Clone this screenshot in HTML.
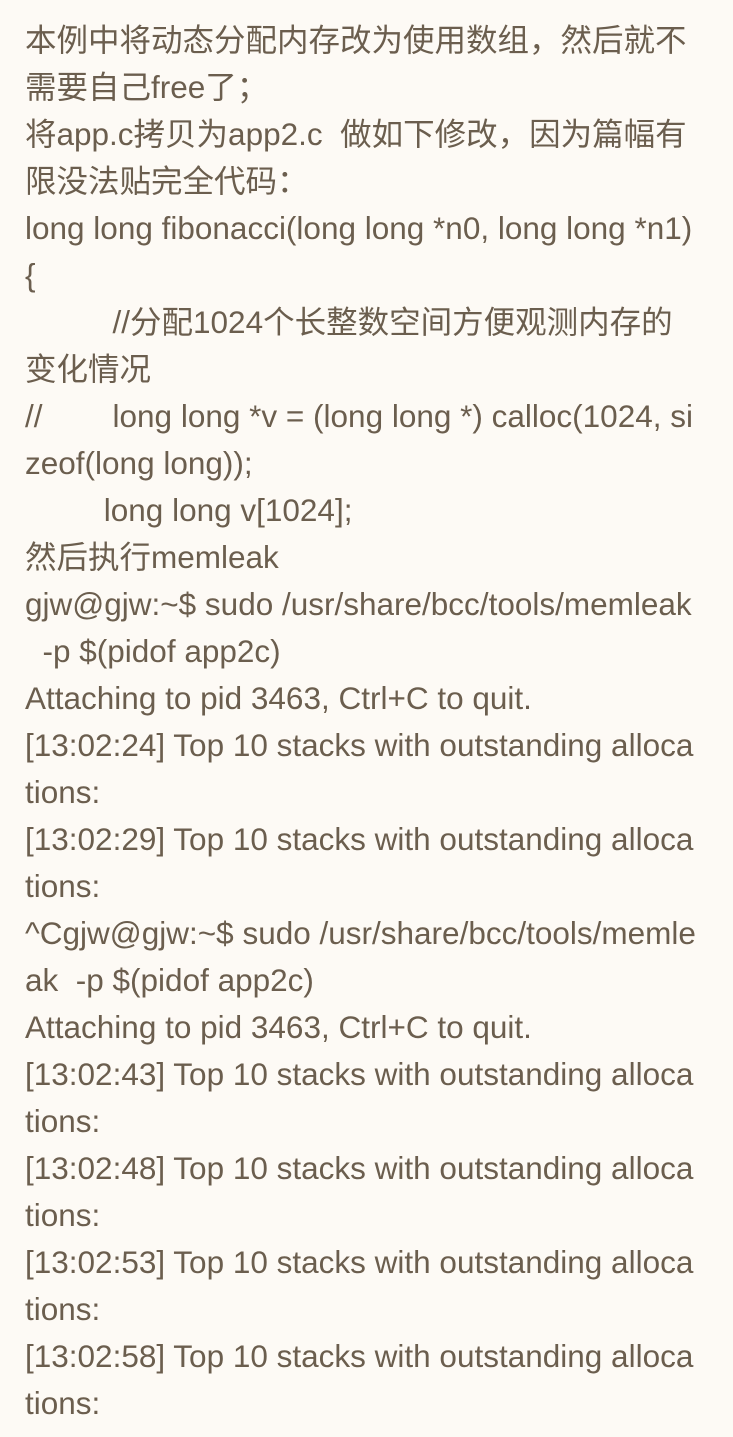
<!DOCTYPE html>
<html><head><meta charset="utf-8"><style>
html,body{margin:0;padding:0;background:#fdfaf5;}
body{width:733px;height:1437px;overflow:hidden;}
.c{padding:17px 0 0 25px;font-family:"Liberation Sans","Noto Sans CJK SC",sans-serif;font-size:31.5px;line-height:47px;color:#6b5e4e;}
.c div{white-space:pre;height:47px;}
</style></head><body><div class="c">
<div>本例中将动态分配内存改为使用数组，然后就不</div>
<div>需要自己free了；</div>
<div>将app.c拷贝为app2.c  做如下修改，因为篇幅有</div>
<div>限没法贴完全代码：</div>
<div>long long fibonacci(long long *n0, long long *n1)</div>
<div>{</div>
<div>          //分配1024个长整数空间方便观测内存的</div>
<div>变化情况</div>
<div>//        long long *v = (long long *) calloc(1024, si</div>
<div>zeof(long long));</div>
<div>         long long v[1024];</div>
<div>然后执行memleak</div>
<div>gjw@gjw:~$ sudo /usr/share/bcc/tools/memleak</div>
<div>  -p $(pidof app2c)</div>
<div>Attaching to pid 3463, Ctrl+C to quit.</div>
<div>[13:02:24] Top 10 stacks with outstanding alloca</div>
<div>tions:</div>
<div>[13:02:29] Top 10 stacks with outstanding alloca</div>
<div>tions:</div>
<div>^Cgjw@gjw:~$ sudo /usr/share/bcc/tools/memle</div>
<div>ak  -p $(pidof app2c)</div>
<div>Attaching to pid 3463, Ctrl+C to quit.</div>
<div>[13:02:43] Top 10 stacks with outstanding alloca</div>
<div>tions:</div>
<div>[13:02:48] Top 10 stacks with outstanding alloca</div>
<div>tions:</div>
<div>[13:02:53] Top 10 stacks with outstanding alloca</div>
<div>tions:</div>
<div>[13:02:58] Top 10 stacks with outstanding alloca</div>
<div>tions:</div>
</div></body></html>
